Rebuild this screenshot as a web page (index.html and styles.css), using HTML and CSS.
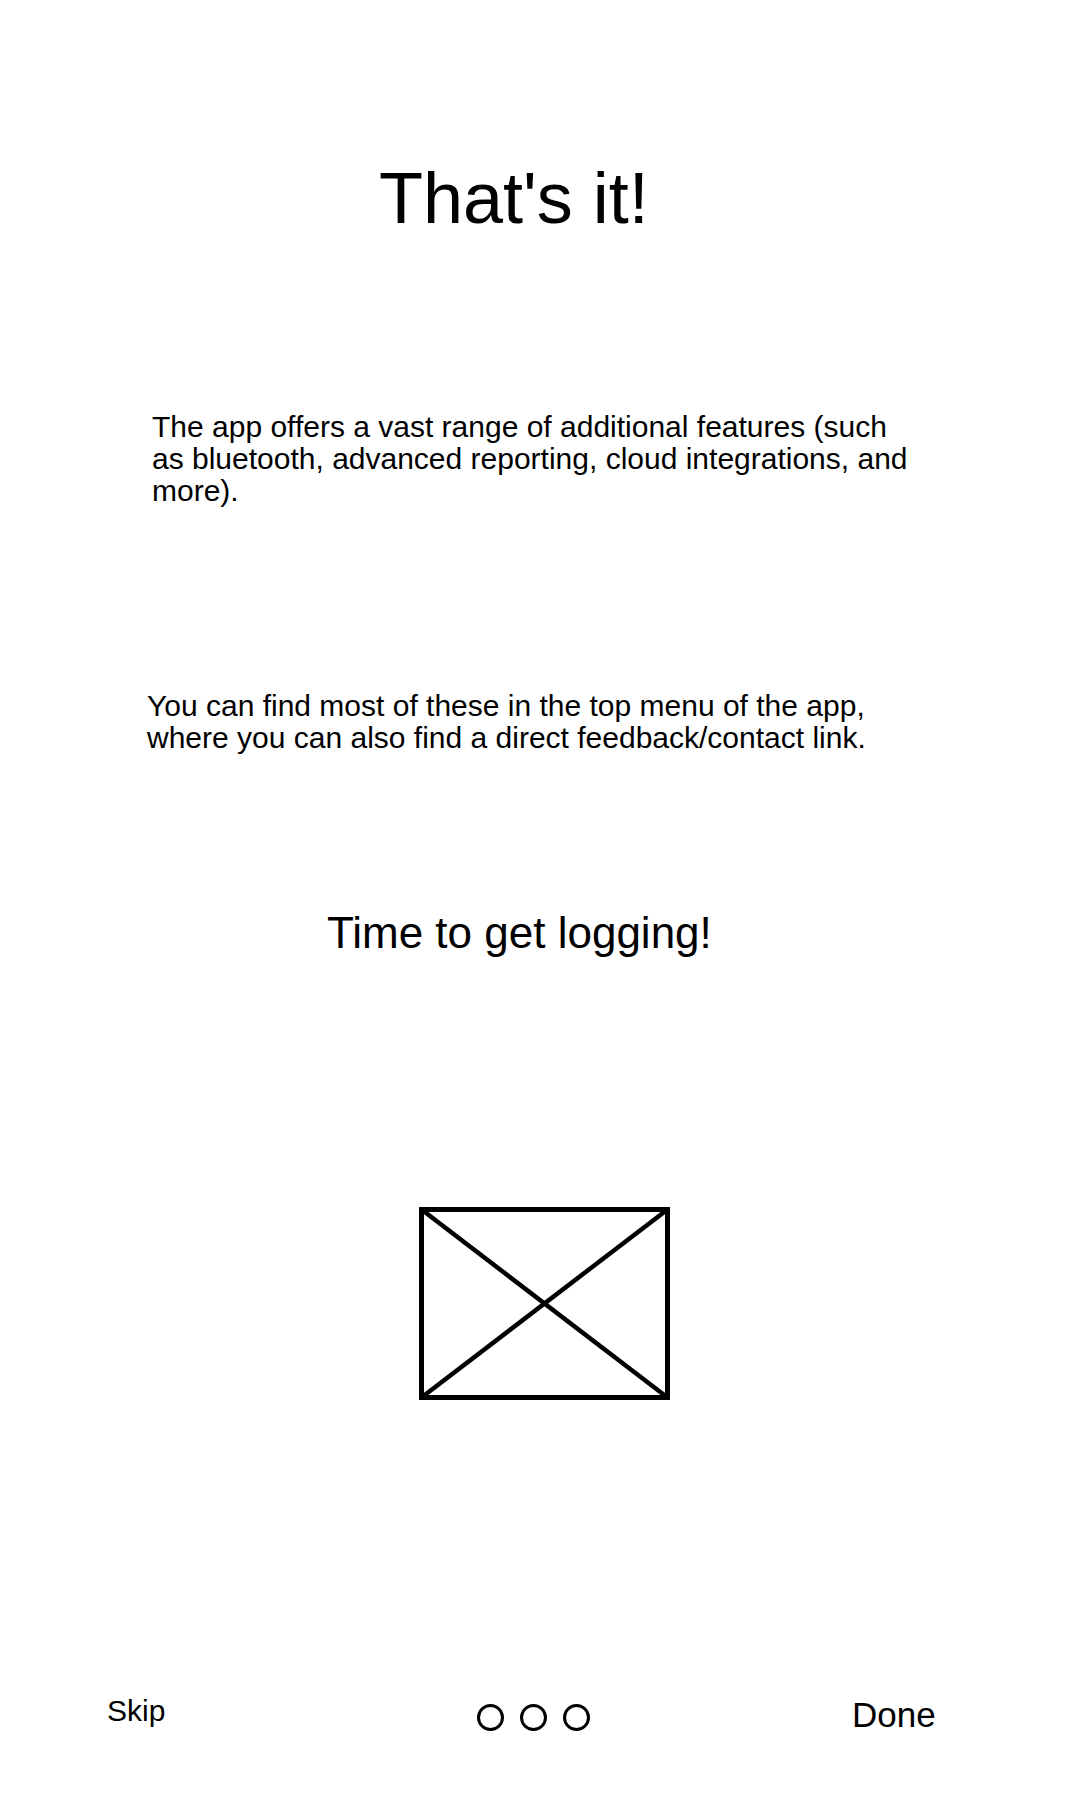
FILE: index.html
```html
<!DOCTYPE html>
<html lang="en">
<head>
<meta charset="utf-8">
<title>That's it!</title>
<link rel="stylesheet" href="styles.css">
</head>
<body>
<main class="screen">
  <h1 class="title">That's it!</h1>
  <p class="text text-first">The app offers a vast range of additional features (such as bluetooth, advanced reporting, cloud integrations, and more).</p>
  <p class="text text-second">You can find most of these in the top menu of the app, where you can also find a direct feedback/contact link.</p>
  <h2 class="subtitle">Time to get logging!</h2>
  <div class="placeholder">
    <svg width="251" height="193" viewBox="0 0 251 193" xmlns="http://www.w3.org/2000/svg">
      <rect x="2.5" y="2.5" width="246" height="188" fill="none" stroke="#000" stroke-width="5"/>
      <line x1="2.5" y1="2.5" x2="248.5" y2="190.5" stroke="#000" stroke-width="4.5"/>
      <line x1="248.5" y1="2.5" x2="2.5" y2="190.5" stroke="#000" stroke-width="4.5"/>
    </svg>
  </div>
  <footer class="footer">
    <span class="skip">Skip</span>
    <span class="dots">
      <span class="dot"></span>
      <span class="dot"></span>
      <span class="dot"></span>
    </span>
    <span class="done">Done</span>
  </footer>
</main>
</body>
</html>
```

FILE: styles.css
```css
html, body {
  margin: 0;
  padding: 0;
  background: #ffffff;
}

body {
  font-family: "Liberation Sans", Arial, sans-serif;
  color: #000000;
}

.screen {
  width: 1080px;
  height: 1800px;
  display: flex;
  flex-direction: column;
  align-items: flex-start;
}

.title {
  margin: 158px 0 0 379px;
  font-size: 72px;
  line-height: 80px;
  font-weight: normal;
}

.text {
  margin: 0;
  width: 760px;
  font-size: 30px;
  line-height: 32px;
}

.text-first {
  margin: 173px 0 0 152px;
}

.text-second {
  margin: 183px 0 0 147px;
}

.subtitle {
  margin: 154px 0 0 327px;
  font-size: 44px;
  line-height: 50px;
  font-weight: normal;
}

.placeholder {
  margin: 249px 0 0 419px;
  line-height: 0;
}

.footer {
  margin-top: 295px;
  padding-left: 107px;
  display: grid;
  grid-template-columns: 370px 375px auto;
  align-items: start;
}

.skip {
  margin-top: 0;
  font-size: 30px;
  line-height: 32px;
}

.dots {
  margin-top: 9px;
  display: flex;
  gap: 16px;
}

.dot {
  width: 27px;
  height: 27px;
  box-sizing: border-box;
  border: 3px solid #000;
  border-radius: 50%;
}

.done {
  font-size: 35px;
  line-height: 40px;
}
```
